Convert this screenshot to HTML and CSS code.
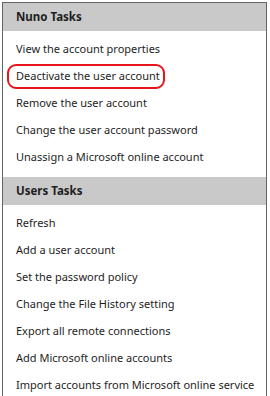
FILE: index.html
```html
<!DOCTYPE html>
<html lang="en">
<head>
  <meta charset="UTF-8">
  <meta name="viewport" content="width=device-width, initial-scale=1.0">
  <title>Tasks</title>
  <link rel="stylesheet" href="styles.css">
</head>
<body>
  <div class="panel">
    <div class="group-title">Nuno Tasks</div>
    <ul class="task-list">
      <li>View the account properties</li>
      <li class="marked">Deactivate the user account<span class="mark"></span></li>
      <li>Remove the user account</li>
      <li>Change the user account password</li>
      <li>Unassign a Microsoft online account</li>
    </ul>
    <div class="group-title">Users Tasks</div>
    <ul class="task-list">
      <li>Refresh</li>
      <li>Add a user account</li>
      <li>Set the password policy</li>
      <li>Change the File History setting</li>
      <li>Export all remote connections</li>
      <li>Add Microsoft online accounts</li>
      <li>Import accounts from Microsoft online service</li>
    </ul>
  </div>
</body>
</html>
```

FILE: styles.css
```css
body {
  font-family: "Noto Sans", "Open Sans", sans-serif;
  margin: 0;
  padding: 2px 0 0 2px;
  background-color: #fff;
  overflow: hidden;
}
.panel {
  width: 263px;
  height: 394px;
  overflow: hidden;
  border: 1px solid #646464;
  border-bottom: none;
}
.group-title {
  height: 28px;
  line-height: 28px;
  padding-left: 13px;
  background-color: #c9c9c9;
  color: #1e1e1e;
  font-size: 11.5px;
  font-weight: bold;
}
.task-list {
  list-style: none;
  margin: 0;
  padding: 4px 0 7px;
}
.task-list li {
  height: 27px;
  line-height: 27px;
  padding-left: 13px;
  font-size: 11px;
  color: #1e1e1e;
  white-space: nowrap;
}
.marked {
  position: relative;
}
.mark {
  position: absolute;
  left: 4px;
  top: 2px;
  width: 154px;
  height: 21px;
  border: 2px solid #e8141c;
  border-radius: 9px;
}
```
